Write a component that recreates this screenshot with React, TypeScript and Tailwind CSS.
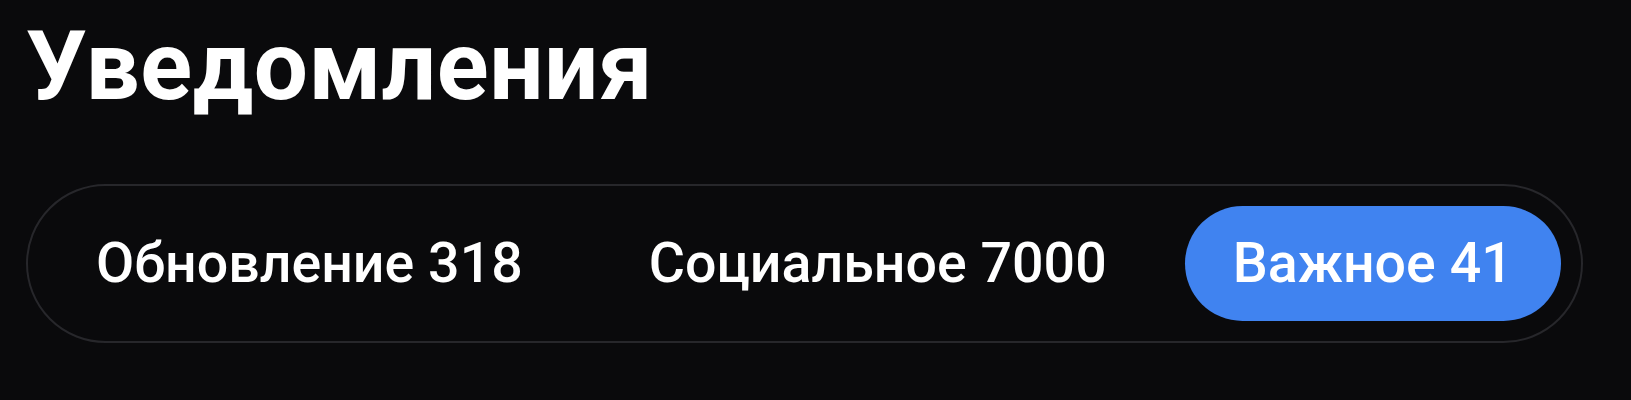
import React, { useState } from 'react';

const tabs = [
  { id: 'updates', label: 'Обновление', count: 318 },
  { id: 'social', label: 'Социальное', count: 7000 },
  { id: 'important', label: 'Важное', count: 41 },
];

export default function App() {
  const [active, setActive] = useState('important');

  return (
    <div
      className="min-h-[400px] w-full bg-[#0a0a0c] px-[26px] pt-[18px] text-white"
      style={{ fontFamily: 'Roboto, "Noto Sans", sans-serif' }}
    >
      <h1 className="text-[96px] font-bold leading-none tracking-[0.5px]">Уведомления</h1>

      <div className="mt-[70px] inline-flex items-center gap-[30px] rounded-full border-2 border-[#27272b] p-[20px]">
        {tabs.map((tab) => (
          <button
            key={tab.id}
            onClick={() => setActive(tab.id)}
            className={`h-[115px] whitespace-nowrap rounded-full px-[48px] text-[55.5px] font-medium leading-none ${
              active === tab.id ? 'bg-[#4083f0] text-white' : 'text-white'
            }`}
          >
            {tab.label} {tab.count}
          </button>
        ))}
      </div>
    </div>
  );
}
